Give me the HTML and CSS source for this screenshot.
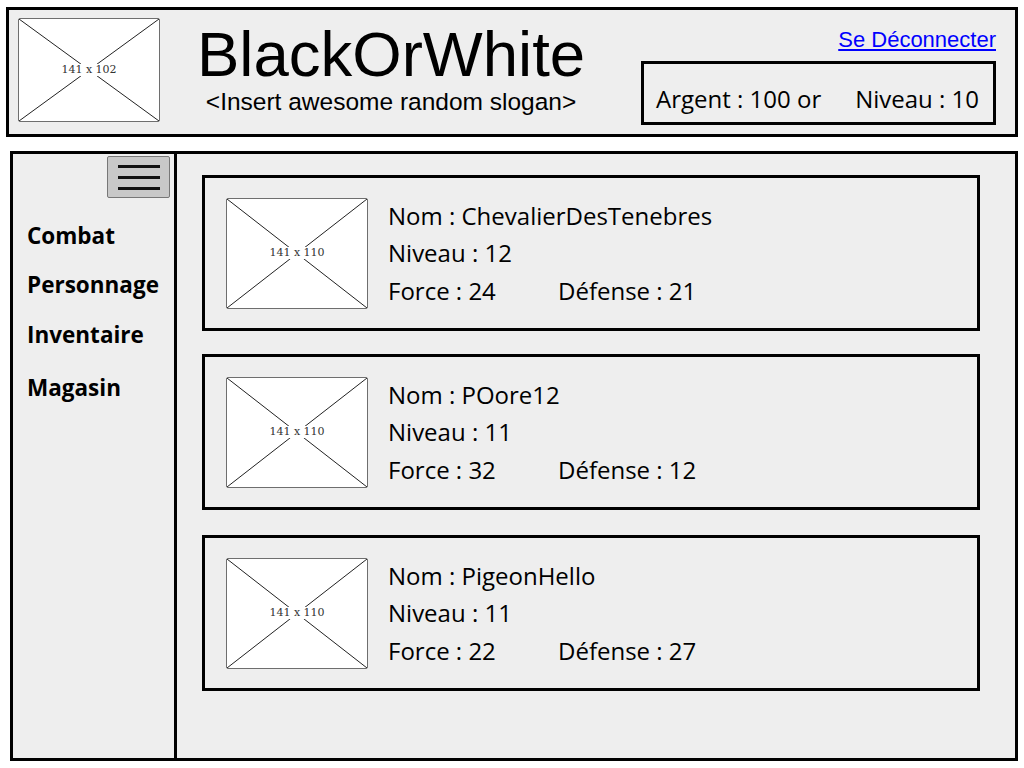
FILE: index.html
```html
<!DOCTYPE html>
<html lang="fr">
<head>
<meta charset="utf-8">
<title>BlackOrWhite</title>
<link rel="stylesheet" href="styles.css">
</head>
<body>
<div class="page">
  <header class="header">
    <div class="ph ph-logo">
      <svg class="ph-lines" viewBox="0 0 100 100" preserveAspectRatio="none"><line x1="0" y1="0" x2="100" y2="100"/><line x1="100" y1="0" x2="0" y2="100"/></svg>
      <span class="ph-label">141 x 102</span>
    </div>
    <div class="brand">
      <h1 class="title">BlackOrWhite</h1>
      <p class="slogan">&lt;Insert awesome random slogan&gt;</p>
    </div>
    <div class="account">
      <a class="logout" href="#">Se Déconnecter</a>
      <div class="stats"><span>Argent : 100 or</span><span>Niveau : 10</span></div>
    </div>
  </header>

  <main class="main">
    <nav class="sidebar">
      <div class="burger-row">
        <button class="burger" type="button" aria-label="Menu"><span></span><span></span><span></span></button>
      </div>
      <ul class="nav">
        <li class="nav-combat">Combat</li>
        <li class="nav-perso">Personnage</li>
        <li class="nav-inv">Inventaire</li>
        <li class="nav-shop">Magasin</li>
      </ul>
    </nav>
    <section class="content">
      <div class="card card-first">
        <div class="ph ph-card">
          <svg class="ph-lines" viewBox="0 0 100 100" preserveAspectRatio="none"><line x1="0" y1="0" x2="100" y2="100"/><line x1="100" y1="0" x2="0" y2="100"/></svg>
          <span class="ph-label">141 x 110</span>
        </div>
        <div class="info">
          <div>Nom : ChevalierDesTenebres</div>
          <div>Niveau : 12</div>
          <div class="stat-row"><span class="force">Force : 24</span><span>Défense : 21</span></div>
        </div>
      </div>
      <div class="card">
        <div class="ph ph-card">
          <svg class="ph-lines" viewBox="0 0 100 100" preserveAspectRatio="none"><line x1="0" y1="0" x2="100" y2="100"/><line x1="100" y1="0" x2="0" y2="100"/></svg>
          <span class="ph-label">141 x 110</span>
        </div>
        <div class="info">
          <div>Nom : POore12</div>
          <div>Niveau : 11</div>
          <div class="stat-row"><span class="force">Force : 32</span><span>Défense : 12</span></div>
        </div>
      </div>
      <div class="card card-last">
        <div class="ph ph-card">
          <svg class="ph-lines" viewBox="0 0 100 100" preserveAspectRatio="none"><line x1="0" y1="0" x2="100" y2="100"/><line x1="100" y1="0" x2="0" y2="100"/></svg>
          <span class="ph-label">141 x 110</span>
        </div>
        <div class="info">
          <div>Nom : PigeonHello</div>
          <div>Niveau : 11</div>
          <div class="stat-row"><span class="force">Force : 22</span><span>Défense : 27</span></div>
        </div>
      </div>
    </section>
  </main>
</div>
</body>
</html>
```

FILE: styles.css
```css
* { box-sizing: border-box; }

html, body {
  margin: 0;
  padding: 0;
  background: #ffffff;
}

body {
  font-family: "Open Sans", "Noto Sans", sans-serif;
  color: #000;
}

.page {
  width: 1024px;
  height: 768px;
  padding: 7px 6px 0 6px;
}

/* ---------- header ---------- */
.header {
  height: 130px;
  border: 3px solid #000;
  background: #eeeeee;
  display: flex;
  align-items: flex-start;
  padding: 8px 19px 0 9px;
}

.ph {
  display: grid;
  background: #fff;
  border: 1.5px solid #6e6e6e;
  border-radius: 2px;
  flex: none;
}

.ph > * {
  grid-area: 1 / 1;
}

.ph-lines {
  width: 100%;
  height: 100%;
  display: block;
}

.ph-lines line {
  stroke: #222;
  stroke-width: 1;
  vector-effect: non-scaling-stroke;
}

.ph-label {
  place-self: center;
  background: #fff;
  font-family: "DejaVu Serif", "Liberation Serif", serif;
  font-size: 11px;
  line-height: 12px;
  padding: 0 2px;
  color: #333;
}

.ph-logo {
  width: 142px;
  height: 104px;
}

.brand {
  margin-left: 37px;
  display: flex;
  flex-direction: column;
  align-items: center;
  margin-top: 4px;
}

.title {
  margin: 0;
  font-family: "Liberation Sans", Arial, sans-serif;
  font-weight: normal;
  font-size: 63.5px;
  line-height: 64px;
}

.slogan {
  margin: 0;
  margin-top: 2px;
  font-family: "Liberation Sans", Arial, sans-serif;
  font-size: 24.5px;
  line-height: 28px;
}

.account {
  margin-left: auto;
  display: flex;
  flex-direction: column;
  align-items: flex-end;
  margin-top: 9px;
}

.logout {
  font-family: "Liberation Sans", Arial, sans-serif;
  font-size: 22px;
  line-height: 26px;
  color: #0000ff;
  text-decoration: underline;
  text-underline-offset: 2px;
}

.stats {
  margin-top: 8px;
  width: 355px;
  height: 64px;
  border: 3px solid #000;
  display: flex;
  align-items: center;
  gap: 34px;
  padding: 11px 0 0 12px;
  font-size: 24px;
}

/* ---------- main ---------- */
.main {
  margin: 14px 0 0 4px;
  height: 610px;
  border: 3px solid #000;
  background: #eeeeee;
  display: flex;
}

.sidebar {
  width: 164px;
  flex: none;
  border-right: 3px solid #000;
}

.burger-row {
  display: flex;
  justify-content: flex-end;
  padding: 2px 4px 0 0;
}

.burger {
  width: 63px;
  height: 42px;
  background: #c8c8c8;
  border: 1.5px solid #777;
  border-radius: 2px;
  padding: 0;
  display: flex;
  flex-direction: column;
  align-items: center;
  justify-content: center;
  gap: 8px;
}

.burger span {
  display: block;
  width: 42px;
  height: 3px;
  background: #111;
}

.nav {
  list-style: none;
  margin: 0;
  padding: 23px 0 0 14px;
  font-weight: bold;
  font-size: 22.5px;
  line-height: 30px;
}

.nav li { margin-bottom: 19px; }
.nav .nav-perso { margin-bottom: 20px; }
.nav .nav-inv { margin-bottom: 23px; }

.content {
  flex: 1;
  display: flex;
  flex-direction: column;
  padding: 21px 35px 0 25px;
  gap: 23px;
}

.card {
  height: 156px;
  border: 3px solid #000;
  display: flex;
  align-items: center;
  padding: 0 0 0 21px;
}

.card-last { margin-top: 2px; }

.ph-card {
  width: 142px;
  height: 111px;
}

.info {
  margin-left: 20px;
  font-size: 24px;
  line-height: 37.5px;
}

.stat-row {
  display: flex;
}

.force {
  width: 170px;
}
```
